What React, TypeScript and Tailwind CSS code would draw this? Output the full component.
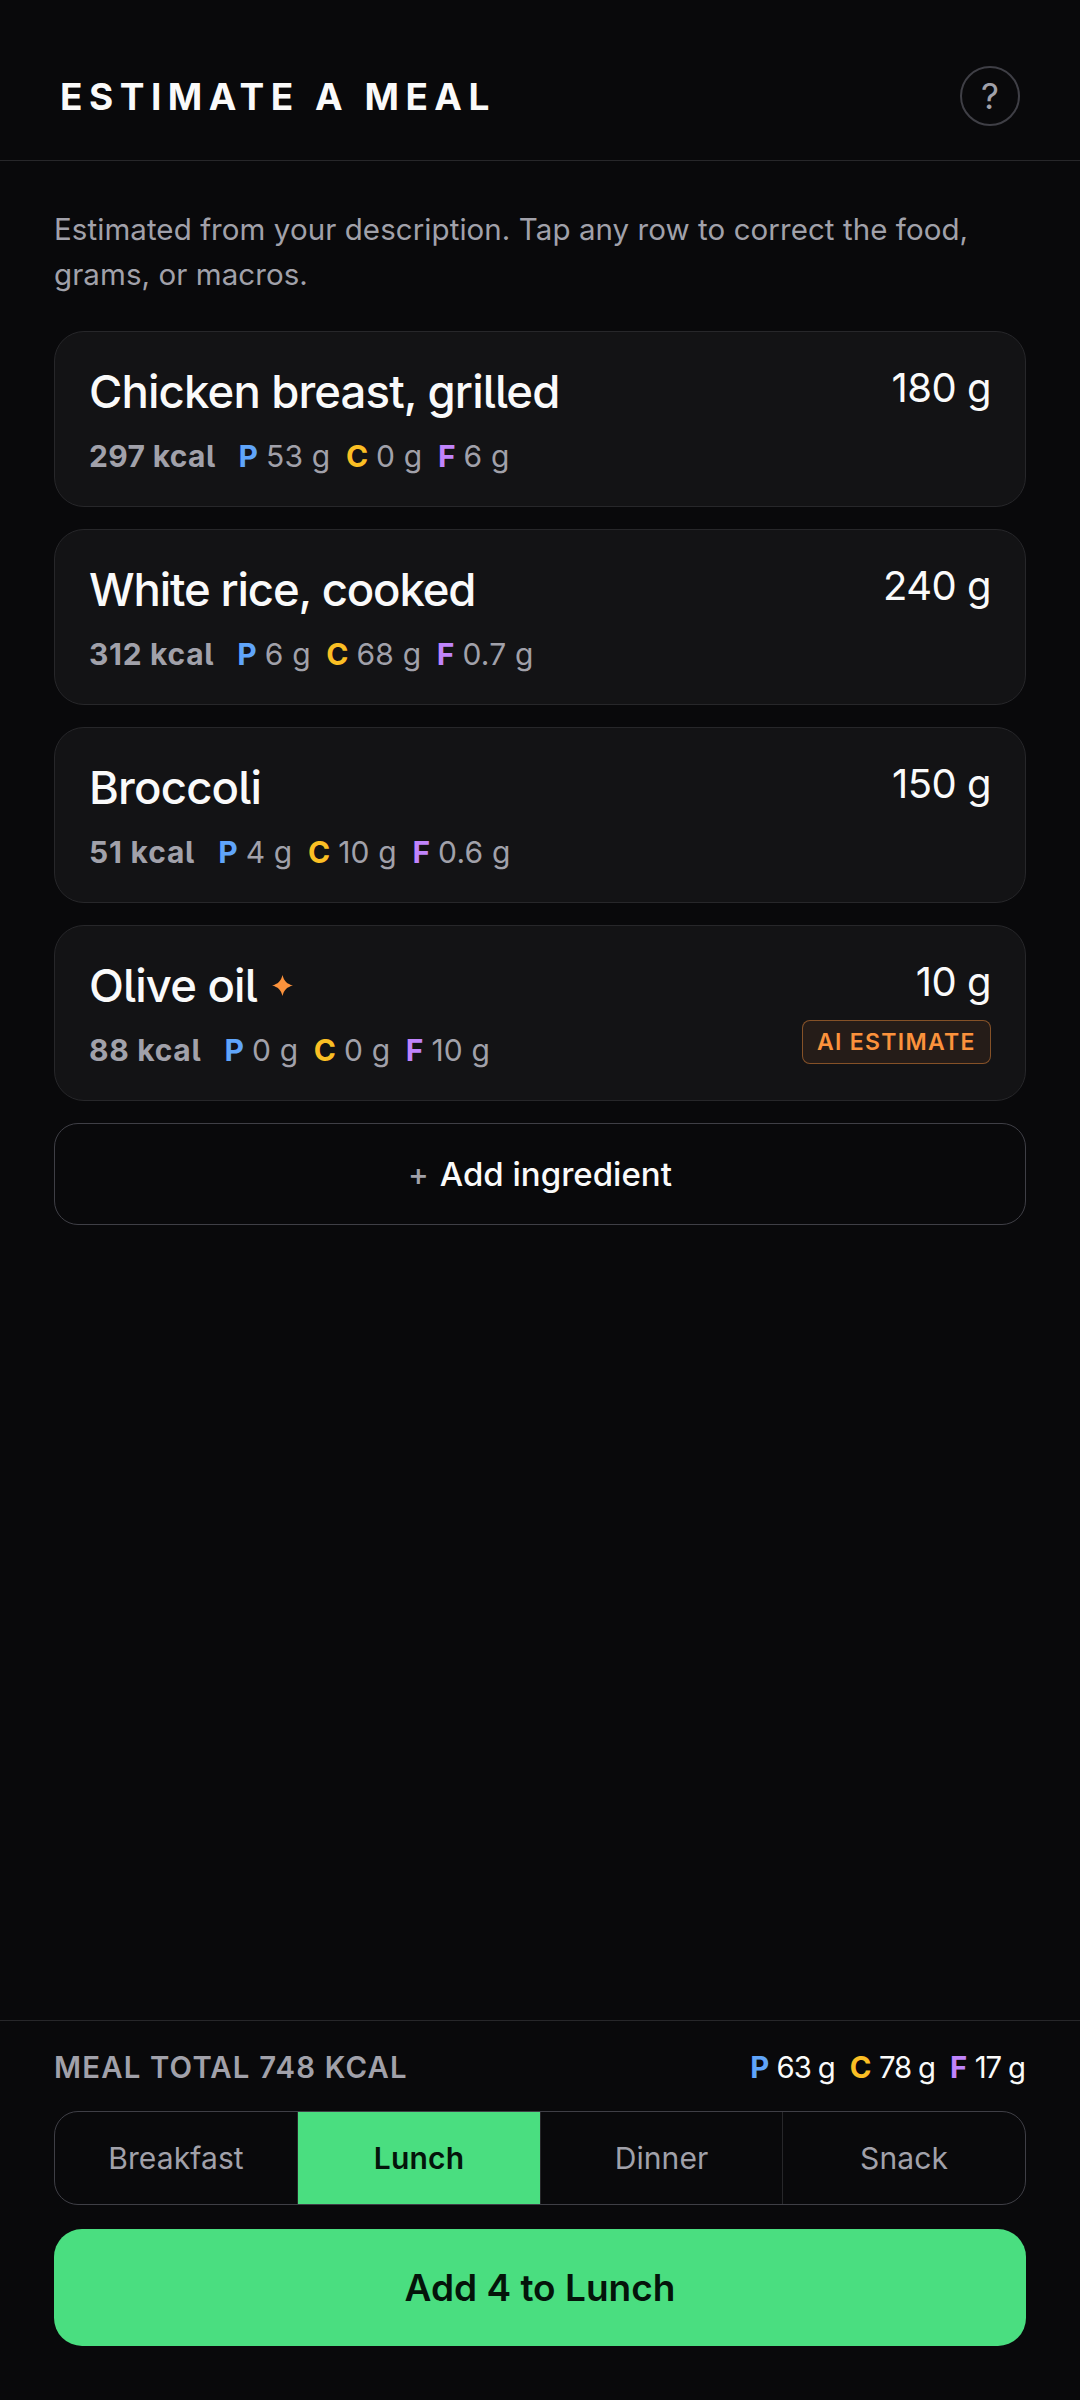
type Macros = { p: string; c: string; f: string };

const items = [
  { name: "Chicken breast, grilled", tracking: "tracking-[-0.87px]", grams: "180 g", kcal: "297 kcal", kcalTracking: "tracking-[0.35px]", macros: { p: "53 g", c: "0 g", f: "6 g" } },
  { name: "White rice, cooked", tracking: "tracking-[-1.15px]", grams: "240 g", kcal: "312 kcal", kcalTracking: "tracking-[0.7px]", macros: { p: "6 g", c: "68 g", f: "0.7 g" } },
  { name: "Broccoli", tracking: "tracking-[-0.8px]", grams: "150 g", kcal: "51 kcal", kcalTracking: "tracking-[0.8px]", macros: { p: "4 g", c: "10 g", f: "0.6 g" } },
  { name: "Olive oil", tracking: "tracking-[-0.85px]", grams: "10 g", kcal: "88 kcal", kcalTracking: "tracking-[0.7px]", macros: { p: "0 g", c: "0 g", f: "10 g" }, estimated: true },
];

const meals = ["Breakfast", "Lunch", "Dinner", "Snack"];

function MacroList({ macros, className, pairClass, valueClass }: { macros: Macros; className: string; pairClass: string; valueClass: string }) {
  const entries = [
    { label: "P", value: macros.p, color: "text-[#60a5fa]" },
    { label: "C", value: macros.c, color: "text-[#fbbf24]" },
    { label: "F", value: macros.f, color: "text-[#c084fc]" },
  ];
  return (
    <div className={`flex ${className}`}>
      {entries.map((e) => (
        <span key={e.label} className={`flex whitespace-nowrap ${pairClass}`}>
          <b className={`font-bold ${e.color}`}>{e.label}</b>
          <span className={valueClass}>{e.value}</span>
        </span>
      ))}
    </div>
  );
}

function Sparkle() {
  return (
    <svg viewBox="0 0 20 20" className="size-[21px]" fill="#fb923c" aria-hidden="true">
      <path d="M10 0C11.3 5.6 14.4 8.7 20 10C14.4 11.3 11.3 14.4 10 20C8.7 14.4 5.6 11.3 0 10C5.6 8.7 8.7 5.6 10 0Z" />
    </svg>
  );
}

export default function App() {
  return (
    <div className="flex h-[2400px] w-[1080px] flex-col bg-[#09090b] font-[Inter,sans-serif] text-[#fafafa] [font-feature-settings:'cv05']">
      <header className="flex h-[161px] items-start justify-between border-b border-[#27272a] px-[60px] pt-[66px]">
        <h1 className="text-[37px] leading-[61px] font-bold tracking-[6.5px]">ESTIMATE A MEAL</h1>
        <button className="flex size-[60px] items-center justify-center rounded-full border-2 border-[#3f3f46] text-[35px] leading-[55px] text-[#a1a1aa]">?</button>
      </header>

      <main className="flex flex-1 flex-col px-[54px] pt-[46px]">
        <p className="mb-[34px] text-[29.5px] leading-[45px] tracking-[0.07px] text-[#a1a1aa]">
          Estimated from your description. Tap any row to correct the food, grams, or macros.
        </p>

        <div className="flex flex-col gap-[22px]">
          {items.map((it) => (
            <article key={it.name} className="flex h-[176px] items-start justify-between rounded-[30px] border border-[#27272a] bg-[#131315] px-[34px]">
              <div className="pt-[32px]">
                <div className="flex items-center gap-[15px]">
                  <h2 className={`text-[45.5px] leading-[55px] font-medium ${it.tracking}`}>{it.name}</h2>
                  {it.estimated && <Sparkle />}
                </div>
                <div className="mt-[19px] flex gap-[23px] text-[30px] leading-[36px] text-[#a1a1aa]">
                  <b className={`font-bold ${it.kcalTracking}`}>{it.kcal}</b>
                  <MacroList macros={it.macros} className="gap-[15.5px]" pairClass="gap-[8px]" valueClass="tracking-[0.2px]" />
                </div>
              </div>
              <div className="flex flex-col items-end pt-[31px]">
                <span className="text-[40px] leading-[49px] tracking-[-0.5px]">{it.grams}</span>
                {it.estimated && (
                  <span className="mt-[14px] flex h-[44px] w-[189px] items-center rounded-[8px] border border-[#fb923c]/45 bg-[#fb923c]/8 pl-[14px] text-[23px] leading-[28px] font-semibold tracking-[1.3px] whitespace-nowrap text-[#fb923c]">
                    AI ESTIMATE
                  </span>
                )}
              </div>
            </article>
          ))}

          <button className="flex h-[102px] items-center justify-center gap-[11px] rounded-[24px] border border-[#3f3f46] text-[33px] leading-[40px] font-medium">
            <span className="text-[31px] text-[#a1a1aa]">+</span>
            <span>Add ingredient</span>
          </button>
        </div>
      </main>

      <footer className="border-t border-[#27272a] px-[54px] pt-[24px] pb-[54px]">
        <div className="flex justify-between text-[29.3px] leading-[45px]">
          <span className="font-semibold tracking-[1.19px] text-[#a1a1aa]">MEAL TOTAL 748 KCAL</span>
          <MacroList macros={{ p: "63 g", c: "78 g", f: "17 g" }} className="mr-px gap-[15px]" pairClass="gap-[7.5px]" valueClass="tracking-[-1.1px]" />
        </div>
        <div className="mt-[21px] grid h-[94px] grid-cols-[243px_243px_242px_242px] overflow-hidden rounded-[24px] border border-[#3f3f46]">
          {meals.map((m) => (
            <button
              key={m}
              className={`flex items-center justify-center border-r border-[#27272a] text-[30px] leading-[36px] last:border-r-0 ${
                m === "Lunch" ? "bg-[#4ade80] font-semibold tracking-[0.2px] text-[#04140a]" : "tracking-[0.1px] text-[#a1a1aa]"
              }`}
            >
              {m}
            </button>
          ))}
        </div>
        <button className="mt-[24px] flex h-[117px] w-full items-center justify-center rounded-[28px] bg-[#4ade80] text-[37px] leading-[45px] font-semibold text-[#04140a]">
          Add 4 to Lunch
        </button>
      </footer>
    </div>
  );
}
